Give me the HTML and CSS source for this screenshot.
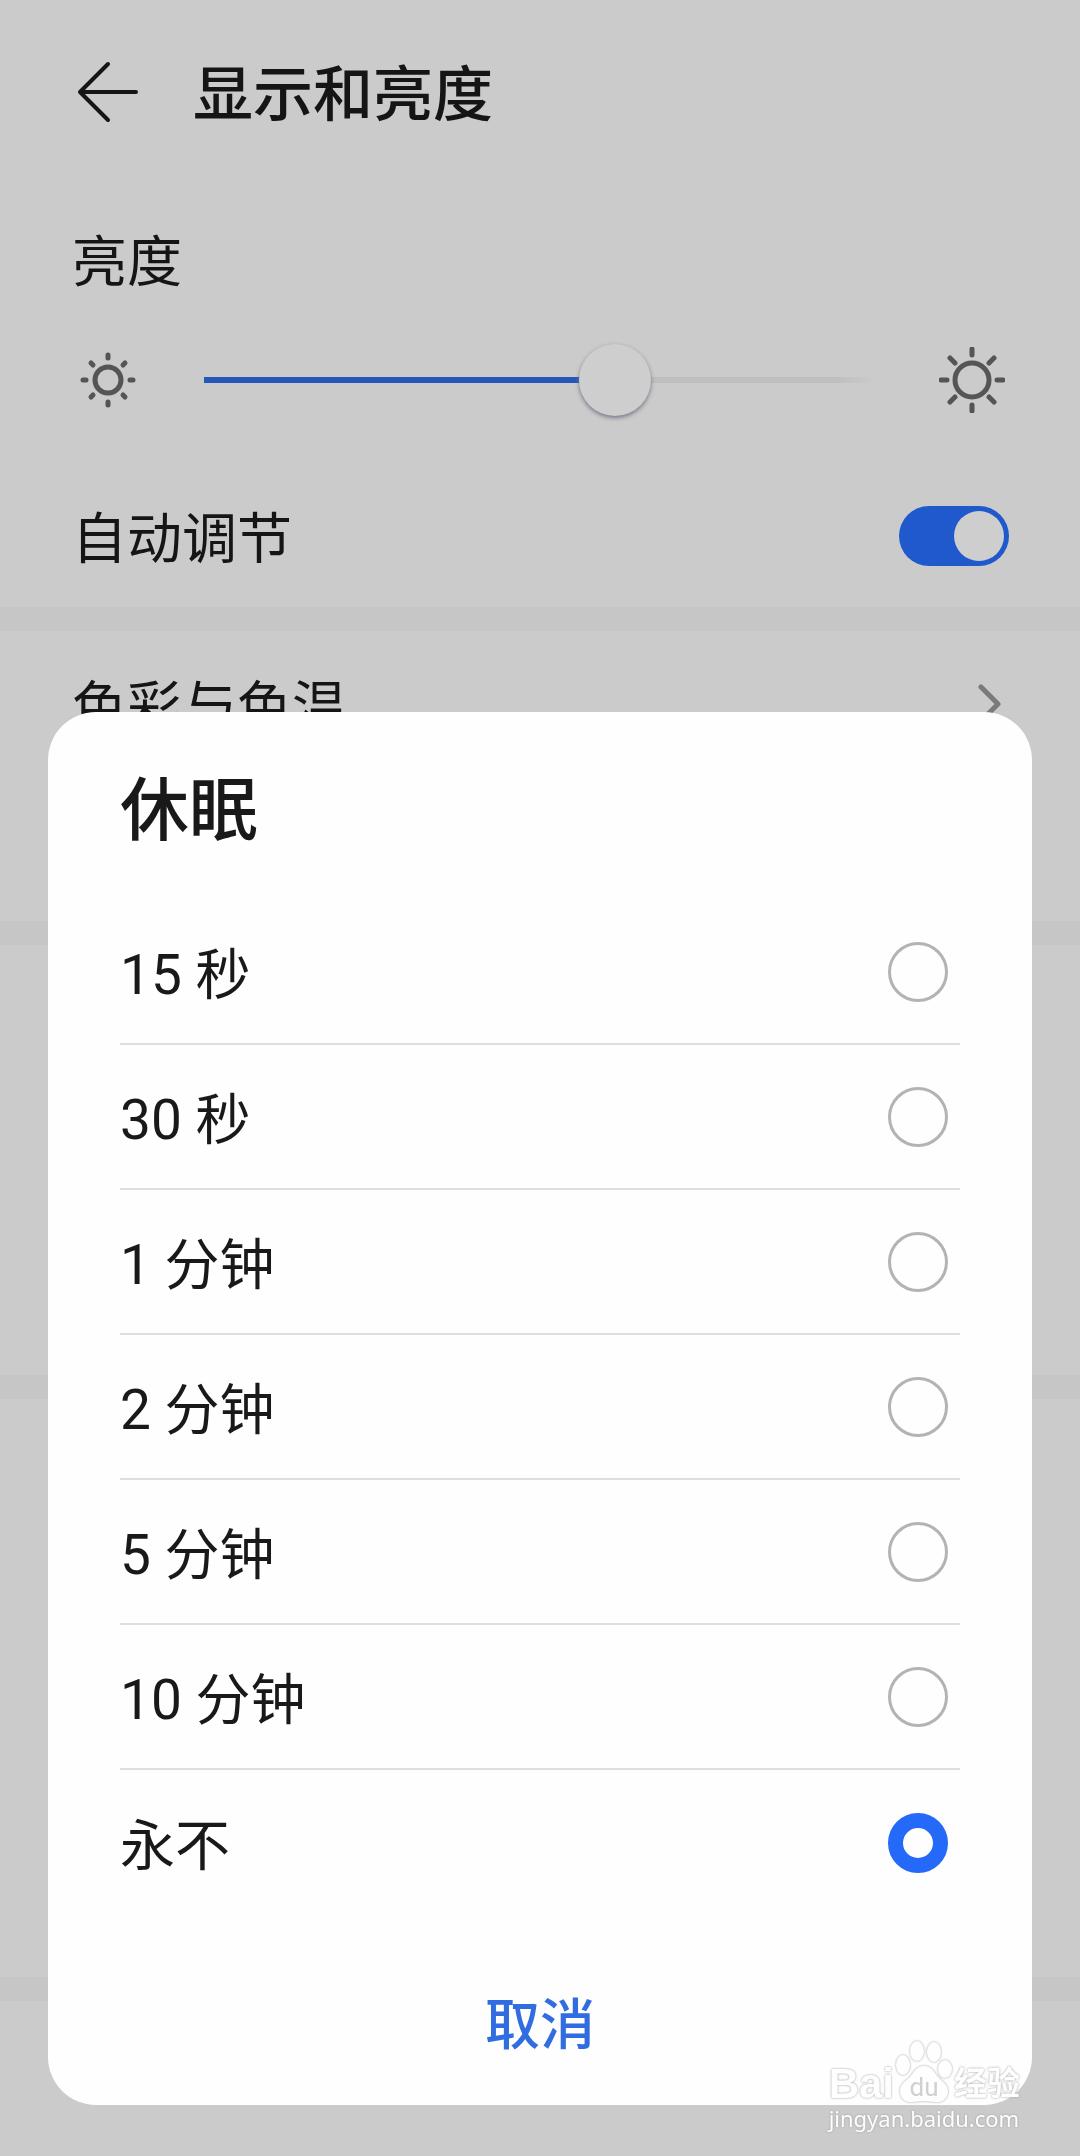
FILE: index.html
```html
<!DOCTYPE html>
<html lang="zh-CN">
<head>
<meta charset="utf-8">
<meta name="viewport" content="width=device-width, initial-scale=1">
<title>显示和亮度</title>
<link rel="stylesheet" href="styles.css">
</head>
<body>
<main class="settings">
  <header class="topbar">
    <button class="back" type="button" aria-label="返回">
      <svg width="64" height="64" viewBox="0 0 64 64"><path d="M32 4 4 32l28 28M4 32h56"/></svg>
    </button>
    <h1 class="topbar-title">显示和亮度</h1>
  </header>

  <section class="group">
    <label class="row row-brightness" for="brightness">亮度</label>
    <div class="slider-row">
      <svg class="sun" width="66" height="66" viewBox="-33 -33 66 66">
        <circle r="13"/>
        <path d="M0-25v3M0 25v-3M-25 0h3M25 0h-3M-17-17l2 2M17-17l-2 2M-17 17l2-2M17 17l-2-2"/>
      </svg>
      <input class="slider" id="brightness" type="range" min="0" max="1000" value="625">
      <svg class="sun" width="66" height="66" viewBox="-33 -33 66 66">
        <circle r="17"/>
        <path d="M0-31v6M0 31v-6M-31 0h6M31 0h-6M-22-22l5 5M22-22l-5 5M-22 22l5-5M22 22l-5-5"/>
      </svg>
    </div>
    <div class="row row-auto">
      <label class="row-text" for="auto">自动调节</label>
      <input class="switch" id="auto" type="checkbox" checked>
    </div>
  </section>

  <section class="group group-color">
    <a class="row row-link" href="#color">
      <span class="row-text">色彩与色温</span>
      <svg class="chevron" width="24" height="40" viewBox="0 0 24 40"><path d="M3 3 20 20 3 37"/></svg>
    </a>
  </section>
  <section class="group group-size"></section>
  <section class="group group-sleep"></section>
  <section class="group group-rest"></section>
</main>

<div class="overlay">
  <form class="dialog" role="dialog" aria-labelledby="dialog-title">
    <h2 class="dialog-title" id="dialog-title">休眠</h2>
    <div class="options">
      <label class="option"><span class="option-text">15 秒</span><input class="radio" type="radio" name="sleep"></label>
      <label class="option"><span class="option-text">30 秒</span><input class="radio" type="radio" name="sleep"></label>
      <label class="option"><span class="option-text">1 分钟</span><input class="radio" type="radio" name="sleep"></label>
      <label class="option"><span class="option-text">2 分钟</span><input class="radio" type="radio" name="sleep"></label>
      <label class="option"><span class="option-text">5 分钟</span><input class="radio" type="radio" name="sleep"></label>
      <label class="option"><span class="option-text">10 分钟</span><input class="radio" type="radio" name="sleep"></label>
      <label class="option"><span class="option-text">永不</span><input class="radio" type="radio" name="sleep" checked></label>
    </div>
    <button class="cancel" type="button">取消</button>
  </form>
</div>

<div class="watermark">
  <div class="brand">
    <span class="brand-bai">Bai</span>
    <span class="paw">
      <svg width="60" height="64" viewBox="0 0 60 64">
        <ellipse cx="9" cy="25" rx="7" ry="10"/>
        <ellipse cx="23" cy="11" rx="7" ry="10"/>
        <ellipse cx="40" cy="12" rx="7" ry="10"/>
        <ellipse cx="51" cy="29" rx="7" ry="9"/>
        <path d="M30 26c-9 0-10 7-15 12-5 4-9 7-9 13 0 8 6 12 13 11 8-1 14-1 22 0 7 1 13-3 13-11 0-6-5-9-9-13-5-5-6-12-15-12z"/>
      </svg>
      <span class="paw-du">du</span>
    </span>
    <span class="brand-exp">经验</span>
  </div>
  <span class="site">jingyan.baidu.com</span>
</div>
</body>
</html>
```
FILE: styles.css
```css
* {
  box-sizing: border-box;
}

body {
  margin: 0;
  background: #cbcbcb;
  color: #151515;
  font-family: Roboto, "Noto Sans CJK SC", sans-serif;
  font-size: 55px;
  line-height: 80px;
}

h1,
h2 {
  margin: 0;
  font-weight: 500;
}

button {
  padding: 0;
  border: 0;
  background: none;
  color: inherit;
  font: inherit;
}

input {
  appearance: none;
  margin: 0;
}

svg {
  display: block;
  fill: none;
  stroke: currentColor;
  stroke-linecap: round;
  stroke-linejoin: round;
}

/* settings page behind the dialog */

.settings {
  display: flex;
  flex-direction: column;
  min-height: 100vh;
}

.topbar {
  display: flex;
  align-items: center;
  gap: 53px;
  height: 184px;
  padding: 0 76px;
}

.back {
  stroke-width: 4px;
}

.topbar-title {
  padding-top: 8px;
  font-size: 60px;
}

.group {
  border-bottom: 24px solid #c6c6c6;
}

.row {
  display: flex;
  align-items: center;
  justify-content: space-between;
  padding: 0 72px;
}

.row-text {
  padding-top: 6px;
}

.row-brightness {
  height: 156px;
}

.slider-row {
  display: flex;
  align-items: center;
  gap: 63px;
  height: 80px;
  padding: 0 75px;
}

.sun {
  flex: none;
  color: #555;
  stroke-width: 5px;
}

.slider {
  flex: 1;
  min-width: 0;
  height: 74px;
  background: linear-gradient(90deg, #2457b8 60%, #bfbfbf 60% 94%, #cbcbcb) center / 100% 6px no-repeat;
  border-radius: 3px;
}

.slider::-webkit-slider-thumb {
  appearance: none;
  width: 72px;
  height: 72px;
  border-radius: 50%;
  background: #cecece;
  box-shadow: 0 2px 4px #77778a;
}

.row-auto {
  height: 187px;
  padding: 44px 71px 0 72px;
}

.switch {
  display: flex;
  align-items: center;
  justify-content: flex-end;
  width: 110px;
  height: 60px;
  padding: 5px;
  border-radius: 30px;
  background: #1f59cc;
}

.switch::before {
  content: "";
  width: 50px;
  height: 50px;
  border-radius: 50%;
  background: #cecece;
}

.row-link {
  height: 145px;
  padding-right: 78px;
  color: inherit;
  text-decoration: none;
}

.chevron {
  color: #7a7a7a;
  stroke-width: 5px;
}

.group-color {
  height: 314px;
}

.group-size {
  height: 454px;
}

.group-sleep {
  height: 602px;
}

.group-rest {
  flex: 1;
  border: 0;
}

/* sleep timeout dialog */

.overlay {
  position: fixed;
  inset: 0;
  display: flex;
  align-items: flex-end;
  padding: 0 48px 51px;
}

.dialog {
  display: flex;
  flex: 1;
  flex-direction: column;
  padding: 0 72px 40px;
  border-radius: 48px;
  background: #fefefe;
  color: #191919;
}

.dialog-title {
  padding: 50px 0 38px;
  font-size: 69px;
  line-height: 100px;
}

.option {
  display: flex;
  align-items: center;
  justify-content: space-between;
  height: 145px;
  padding-right: 12px;
  border-bottom: 2px solid #dedede;
}

.option:last-child {
  border-bottom: 0;
}

.option-text {
  padding-top: 6px;
}

.radio {
  width: 60px;
  height: 60px;
  border: 3px solid #b3b3b3;
  border-radius: 50%;
}

.radio:checked {
  border: 15px solid #2469f8;
}

.cancel {
  margin-top: 70px;
  color: #316de0;
  font-weight: 500;
}

/* site mark in the corner */

.watermark {
  position: fixed;
  right: 60px;
  bottom: 26px;
  display: flex;
  flex-direction: column;
  gap: 2px;
  color: #fefefe;
  filter: drop-shadow(0 0 1px #a0a0a0);
}

.brand {
  display: flex;
  align-items: flex-end;
  line-height: 40px;
}

.brand-bai {
  font-family: "Liberation Sans", sans-serif;
  font-size: 42px;
  font-weight: 700;
}

.paw {
  position: relative;
}

.paw svg {
  fill: #fefefe;
  stroke: none;
}

.paw-du {
  position: absolute;
  inset: auto 0 0;
  color: #d0d0d0;
  font-size: 26px;
  line-height: 34px;
  text-align: center;
}

.brand-exp {
  font-size: 33px;
  font-weight: 700;
}

.site {
  font-family: "Noto Sans", sans-serif;
  font-size: 22px;
  line-height: 24px;
}
```
